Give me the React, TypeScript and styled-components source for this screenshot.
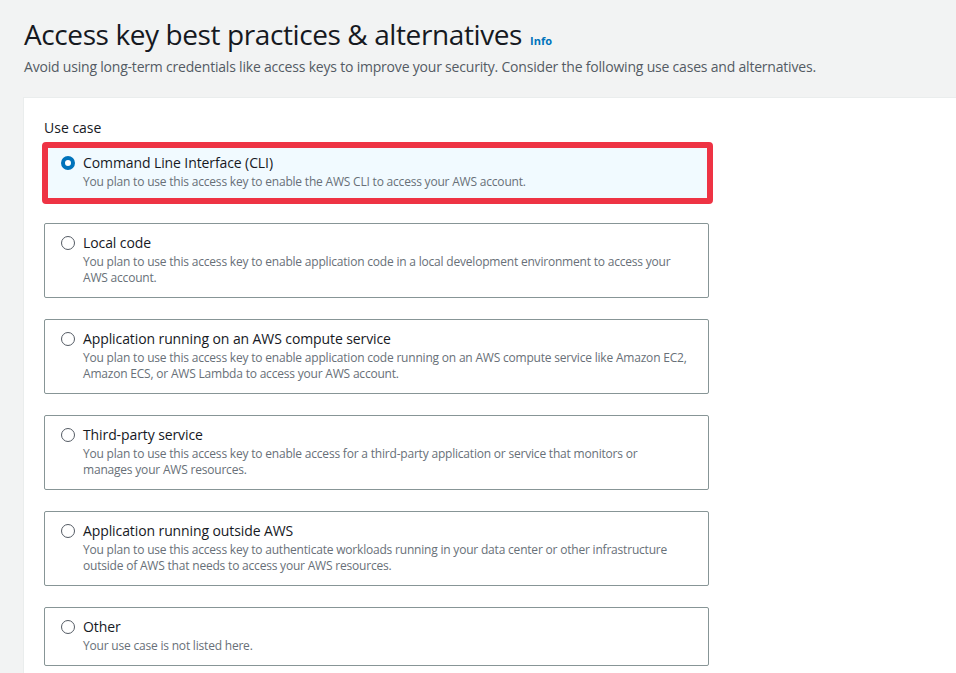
import React from "react";
import styled, { createGlobalStyle } from "styled-components";

const Global = createGlobalStyle`
  html, body { margin: 0; padding: 0; background: #f2f3f3; }
  body { font-family: "Open Sans", "Noto Sans", sans-serif; color: #16191f; }
  * { box-sizing: border-box; }
`;

const Page = styled.div`
  width: 956px;
  height: 673px;
  overflow: hidden;
  display: flex;
  flex-direction: column;
`;

const Header = styled.header`
  padding: 14px 0 0 24px;
  height: 97px;
`;

const TitleRow = styled.div`
  display: flex;
  align-items: baseline;
  gap: 8px;
`;

const Title = styled.h1`
  margin: 0;
  font-size: 28px;
  line-height: 40px;
  font-weight: 400;
  color: #16191f;
  letter-spacing: -0.4px;
`;

const InfoLink = styled.a`
  font-size: 11px;
  font-weight: 700;
  color: #0073bb;
  text-decoration: none;
`;

const Subtitle = styled.p`
  margin: 3px 0 0;
  font-size: 14px;
  line-height: 20px;
  color: #545b64;
  letter-spacing: -0.2px;
`;

const Panel = styled.section`
  flex: 1;
  margin-left: 23px;
  background: #ffffff;
  border-top: 1px solid #eaeded;
  border-left: 1px solid #eaeded;
  padding: 19px 0 0 20px;
`;

const Label = styled.div`
  font-size: 14px;
  line-height: 22px;
  color: #16191f;
  margin-bottom: 4px;
`;

const Options = styled.div`
  width: 665px;
  display: flex;
  flex-direction: column;
  gap: 21px;
`;

const Card = styled.label<{ $selected?: boolean }>`
  position: relative;
  display: flex;
  gap: 8px;
  padding: 8px 20px 11px 16px;
  border: 1px solid ${(p) => (p.$selected ? "#0073bb" : "#879596")};
  border-radius: 2px;
  background: ${(p) => (p.$selected ? "#f1faff" : "#ffffff")};
  cursor: pointer;
`;

const Highlight = styled.span`
  position: absolute;
  left: -3px;
  right: -5px;
  top: -2px;
  bottom: -3px;
  border: 6px solid #ee3344;
  border-radius: 4px;
  pointer-events: none;
`;

const Radio = styled.span<{ $checked?: boolean }>`
  flex: none;
  width: 14px;
  height: 14px;
  margin-top: 4px;
  border-radius: 50%;
  border: ${(p) => (p.$checked ? "4px solid #0073bb" : "1px solid #545b64")};
  background: #ffffff;
`;

const Text = styled.div`
  display: flex;
  flex-direction: column;
`;

const OptionTitle = styled.span`
  font-size: 14px;
  line-height: 22px;
  color: #16191f;
  letter-spacing: -0.1px;
`;

const OptionDesc = styled.span`
  font-size: 12px;
  line-height: 16px;
  color: #687078;
  letter-spacing: -0.2px;
`;

const options = [
  {
    title: "Command Line Interface (CLI)",
    desc: "You plan to use this access key to enable the AWS CLI to access your AWS account.",
  },
  {
    title: "Local code",
    desc: "You plan to use this access key to enable application code in a local development environment to access your AWS account.",
  },
  {
    title: "Application running on an AWS compute service",
    desc: "You plan to use this access key to enable application code running on an AWS compute service like Amazon EC2, Amazon ECS, or AWS Lambda to access your AWS account.",
  },
  {
    title: "Third-party service",
    desc: "You plan to use this access key to enable access for a third-party application or service that monitors or manages your AWS resources.",
  },
  {
    title: "Application running outside AWS",
    desc: "You plan to use this access key to authenticate workloads running in your data center or other infrastructure outside of AWS that needs to access your AWS resources.",
  },
  {
    title: "Other",
    desc: "Your use case is not listed here.",
  },
];

export default function App() {
  const selected = 0;
  return (
    <Page>
      <Global />
      <Header>
        <TitleRow>
          <Title>Access key best practices &amp; alternatives</Title>
          <InfoLink href="#">Info</InfoLink>
        </TitleRow>
        <Subtitle>
          Avoid using long-term credentials like access keys to improve your security. Consider the following use cases and alternatives.
        </Subtitle>
      </Header>
      <Panel>
        <Label>Use case</Label>
        <Options>
          {options.map((o, i) => (
            <Card key={o.title} $selected={i === selected}>
              <Radio $checked={i === selected} />
              <Text>
                <OptionTitle>{o.title}</OptionTitle>
                <OptionDesc>{o.desc}</OptionDesc>
              </Text>
              {i === selected && <Highlight />}
            </Card>
          ))}
        </Options>
      </Panel>
    </Page>
  );
}
